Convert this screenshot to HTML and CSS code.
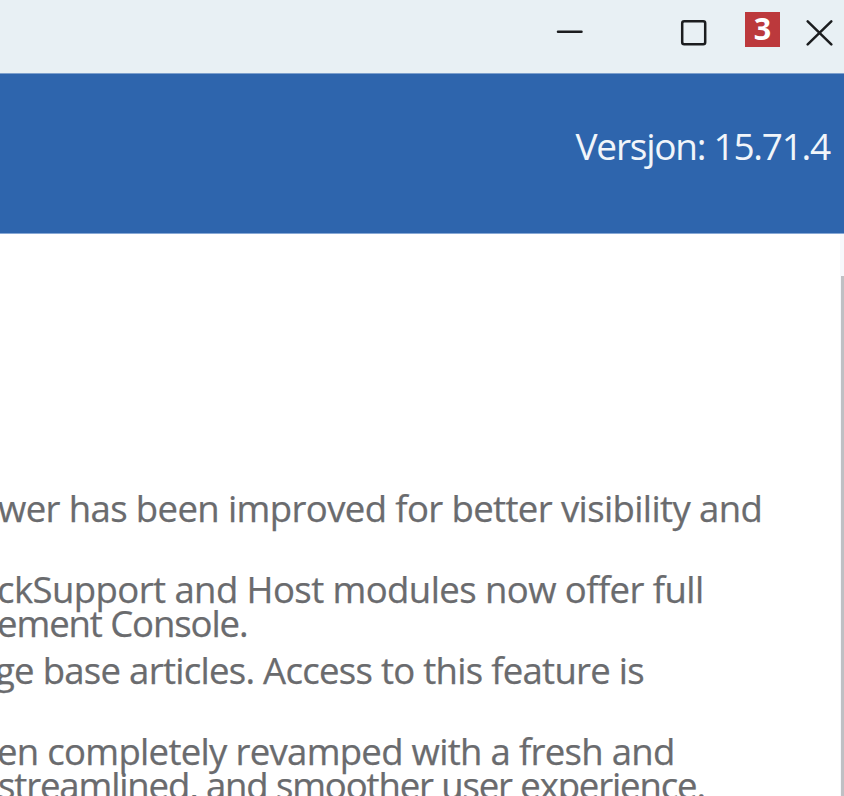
FILE: index.html
```html
<!DOCTYPE html>
<html lang="nb">
<head>
<meta charset="utf-8">
<title>Versjon</title>
<link rel="stylesheet" href="styles.css">
</head>
<body>
<div class="window">
  <header class="titlebar">
    <svg class="minimize" width="28" height="28" viewBox="0 0 28 28"><path d="M3 12.7H26.5"/></svg>
    <svg class="maximize" width="28" height="28" viewBox="0 0 28 28"><rect x="3.2" y="2.3" width="23" height="23" rx="2"/></svg>
    <span class="badge">3</span>
    <svg class="close" width="28" height="28" viewBox="0 0 28 28"><path d="M2.7 2.3L26.3 25.4M26.3 2.3L2.7 25.4"/></svg>
  </header>
  <div class="banner"><span class="version">Versjon: 15.71.4</span></div>
  <main class="content">
    <div class="notes">
      <p class="note"><span class="line l1">wer has been improved for better visibility and</span></p>
      <p class="note"><span class="line l2">ckSupport and Host modules now offer full</span><span class="line l3">ement Console.</span></p>
      <p class="note"><span class="line l4">ge base articles. Access to this feature is</span></p>
      <p class="note"><span class="line l5">en completely revamped with a fresh and</span><span class="line l6">streamlined, and smoother user experience.</span></p>
    </div>
    <div class="scrollbar"><div class="thumb"></div></div>
  </main>
</div>
</body>
</html>
```

FILE: styles.css
```css
* { box-sizing: border-box; }
body { margin: 0; overflow: hidden; background: #fff; font-family: "Open Sans", "Noto Sans", sans-serif; }
.window { width: 844px; height: 796px; display: flex; flex-direction: column; overflow: hidden; }
.titlebar { height: 73px; flex: none; display: flex; align-items: flex-start; justify-content: flex-end; padding: 12px 11px 0 0; background: #e8f0f4; }
.titlebar svg { margin-top: 7px; fill: none; stroke: #1b1d1f; stroke-width: 2.5; stroke-linecap: round; }
.minimize { margin-right: 96px; }
.maximize { margin-right: 38px; }
.badge { width: 35px; height: 35px; margin-right: 25px; background: #bc393c; color: #fff; font-size: 30.5px; font-weight: 700; line-height: 33px; text-align: center; }
.banner { height: 161px; flex: none; display: flex; justify-content: flex-end; padding: 47px 14px 0 0; background: #2e65ad; border-top: 1px solid #7da0cd; border-bottom: 1px solid #87a8d5; }
.version { color: #f1f5fa; font-size: 37px; line-height: 50px; letter-spacing: -1.25px; white-space: nowrap; }
.content { flex: 1; min-height: 0; display: flex; justify-content: space-between; overflow: hidden; }
.notes { width: 800px; flex: none; padding-top: 256.5px; color: #6a6b6e; font-size: 36.5px; line-height: 34px; -webkit-text-stroke: 0.25px #6a6b6e; }
.note { height: 68px; margin: 0 0 13px; }
.line { display: block; white-space: nowrap; }
.l1 { margin-left: -2px; letter-spacing: -0.61px; }
.l2 { margin-left: -3px; letter-spacing: -0.57px; }
.l3 { margin-left: -3px; letter-spacing: -1.08px; }
.l4 { margin-left: -5px; letter-spacing: -0.71px; }
.l5 { margin-left: -3px; letter-spacing: -0.69px; }
.l6 { margin-left: -2px; letter-spacing: -1.12px; }
.scrollbar { width: 4px; flex: none; padding: 42px 0 0 1px; background: #f7f8fc; }
.thumb { height: 600px; background: #bfc0c4; }
```
